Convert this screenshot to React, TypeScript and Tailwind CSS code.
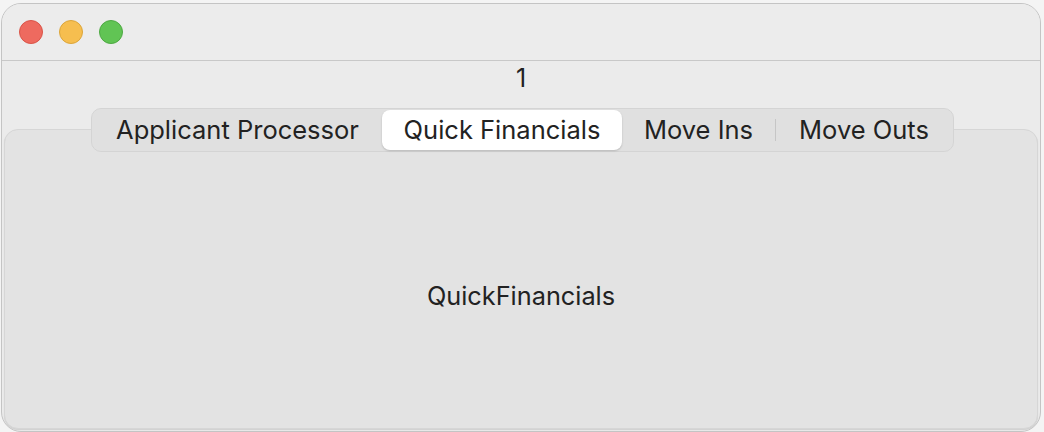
const tabs = [
  { label: "Applicant Processor", w: "w-[289px]" },
  { label: "Quick Financials", w: "w-[240px]" },
  { label: "Move Ins", w: "w-[153px]" },
  { label: "Move Outs", w: "w-[176px]" },
];

export default function App() {
  const selected = 1;

  return (
    <div
      className="h-[432px] w-[1044px] overflow-hidden bg-[#f4f4f4] pl-[1px] pt-[3px] text-[#222222]"
      style={{ fontFamily: "Inter, 'Noto Sans', sans-serif" }}
    >
      <div className="flex h-[429px] w-[1040px] flex-col overflow-hidden rounded-[20px] border border-[#c4c4c4] bg-[#ebebeb]">
        {/* title bar */}
        <div className="flex h-[57px] shrink-0 items-center gap-[16px] border-b border-[#c8c8c8] bg-[#ececec] pl-[17px]">
          <span className="h-[24px] w-[24px] rounded-full border border-[#d95448] bg-[#ee6a5f]" />
          <span className="h-[24px] w-[24px] rounded-full border border-[#dba53a] bg-[#f6be4f]" />
          <span className="h-[24px] w-[24px] rounded-full border border-[#4ea843] bg-[#61c454]" />
        </div>

        <div className="flex h-[33px] shrink-0 items-center justify-center pt-[1px] text-[25px] leading-none">1</div>

        <div className="relative flex flex-1 flex-col px-[2px] pt-[35px]">
          {/* tab panel */}
          <div className="flex h-[300px] flex-col items-center rounded-[14px] border border-[#d6d6d6] bg-[#e3e3e3] shadow-[0_1px_1px_rgba(0,0,0,0.12)]">
            <div className="pt-[153px] text-[25.3px] leading-none">QuickFinancials</div>
          </div>

          {/* segmented control */}
          <div className="absolute left-[89px] top-[14px] flex h-[44px] items-center rounded-[10px] border border-[#d4d4d4] bg-[#e0e0e0] px-[1px]">
            {tabs.map((t, i) => (
              <div key={t.label} className="flex items-center">
                {i === 3 && <span className="h-[22px] w-px bg-[#c6c6c6]" />}
                <div
                  className={
                    i === selected
                      ? `flex h-[40px] ${t.w} items-center justify-center rounded-[8px] bg-white text-[25.5px] shadow-[0_1px_2px_rgba(0,0,0,0.18)]`
                      : `flex h-[40px] ${t.w} items-center justify-center text-[25.5px]`
                  }
                >
                  {t.label}
                </div>
              </div>
            ))}
          </div>
        </div>
      </div>
    </div>
  );
}
